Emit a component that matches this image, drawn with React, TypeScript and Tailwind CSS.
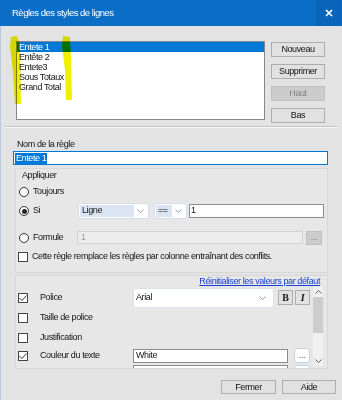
import clsx from "clsx";

const FONT = "font-['Liberation_Sans',Arial,sans-serif]";

const rules = ["Entete 1", "Entête 2", "Entete3", "Sous Totaux", "Grand Total"];

/* ── small Win10-ish controls ─────────────────────────────────────────── */
function Chevron({ up = false, className = "" }: { up?: boolean; className?: string }) {
  return (
    <svg width="7" height="4" viewBox="0 0 7 4" className={className}>
      <polyline
        points={up ? "0.5,3.5 3.5,0.5 6.5,3.5" : "0.5,0.5 3.5,3.5 6.5,0.5"}
        fill="none"
        stroke="currentColor"
        strokeWidth="1"
      />
    </svg>
  );
}

function Button({ label, disabled = false, className = "" }: { label: string; disabled?: boolean; className?: string }) {
  return (
    <div
      className={clsx(
        "flex items-center justify-center border leading-none",
        disabled ? "border-[#bfbfbf] bg-[#cccccc] text-[#838383]" : "border-[#adadad] bg-[#e1e1e1] text-[#111]",
        className
      )}
    >
      {label}
    </div>
  );
}

function Radio({ checked = false }: { checked?: boolean }) {
  return (
    <span className="flex h-[10px] w-[10px] shrink-0 items-center justify-center rounded-full border border-[#333] bg-white">
      {checked && <span className="h-[5px] w-[5px] rounded-full bg-[#222]" />}
    </span>
  );
}

function Check({ checked = false }: { checked?: boolean }) {
  return (
    <span className="flex h-[10px] w-[10px] shrink-0 items-center justify-center border border-[#444] bg-white">
      {checked && (
        <svg width="8" height="6" viewBox="0 0 8 6">
          <polyline points="0.5,3 3,5.5 7.5,0.5" fill="none" stroke="#333" strokeWidth="1" />
        </svg>
      )}
    </span>
  );
}

function Combo({ value, className = "" }: { value: string; className?: string }) {
  return (
    <div className={clsx("flex h-[16px] rounded-[3px] border border-[#d3ddef] bg-white p-[1px]", className)}>
      <span className="flex flex-1 items-center bg-[#dbe4f2] pl-[2px]">{value}</span>
      <span className="flex w-[13px] items-center justify-center text-[#8a9cc0]">
        <Chevron />
      </span>
    </div>
  );
}

/* ── option row in the lower panel ────────────────────────────────────── */
function OptionRow({ label, checked, h, children }: { label: string; checked?: boolean; h: string; children?: React.ReactNode }) {
  return (
    <div className={clsx("flex shrink-0 items-center pl-[2px]", h)}>
      <Check checked={checked} />
      <span className="ml-[12px] w-[93px]">{label}</span>
      {children}
    </div>
  );
}

export default function App() {
  return (
    <div
      className={clsx(
        "relative flex h-[400px] w-[342px] flex-col overflow-hidden bg-[#e3e3e3] text-[9px] tracking-[-0.4px] text-[#141414]",
        FONT
      )}
    >
      {/* Title bar */}
      <div className="flex h-[26px] shrink-0 items-center bg-[#0a6dc6] text-white">
        <span className="flex-1 pl-[12px] text-[9.5px] tracking-[-0.5px]">Règles des styles de lignes</span>
        <span className="mr-[1px] flex h-full w-[25px] items-center justify-center bg-[#0964ba]">
          <svg width="8" height="8" viewBox="0 0 8 8">
            <path d="M1 1L7 7M7 1L1 7" stroke="white" strokeWidth="1.7" />
          </svg>
        </span>
      </div>

      <div className="flex flex-1 flex-col border-l border-[#b7c9e2]">
        {/* Rule list + side buttons */}
        <div className="mt-[15px] flex pl-[15px]">
          <div className="h-[79px] w-[249px] border border-[#828790] bg-white leading-[10px]">
            {rules.map((r, i) => (
              <div key={r} className={clsx("h-[10px] pl-[2px]", i === 0 && "bg-[#0078d7] text-white")}>
                {r}
              </div>
            ))}
          </div>
          <div className="ml-[6px] flex flex-col gap-[7px] pt-[1px]">
            <Button label="Nouveau" className="h-[15px] w-[54px]" />
            <Button label="Supprimer" className="h-[15px] w-[54px]" />
            <Button label="Haut" disabled className="h-[15px] w-[54px]" />
            <Button label="Bas" className="h-[15px] w-[54px]" />
          </div>
        </div>

        {/* Separator */}
        <div className="ml-[4px] mt-[3px] h-[2px] w-[332px] border-t border-b border-t-[#c6c6c6] border-b-[#f6f6f6]" />

        {/* Rule name */}
        <div className="mt-[10px] h-[12px] pl-[16px] leading-[12px]">Nom de la règle</div>
        <div className="ml-[12px] mt-[1px] flex h-[14px] w-[315px] items-center border border-[#0078d7] bg-white pl-[1px]">
          <span className="bg-[#0078d7] px-[1px] leading-[11px] text-white">Entete 1</span>
        </div>

        {/* Appliquer group */}
        <div className="ml-[14px] mt-[3px] flex h-[105px] w-[313px] flex-col border border-[#d8d8d8] bg-[#e7e7e7]">
          <div className="h-[13px] pl-[6px] leading-[13px]">Appliquer</div>
          <div className="flex h-[20px] items-center gap-[4px] pl-[3px]">
            <Radio />
            <span>Toujours</span>
          </div>
          <div className="flex h-[18px] items-center pl-[3px]">
            <span className="flex w-[59px] items-center gap-[4px]">
              <Radio checked />
              <span>Si</span>
            </span>
            <Combo value="Ligne" className="w-[71px]" />
            <Combo value="==" className="ml-[5px] w-[33px]" />
            <div className="ml-[2px] flex h-[14px] w-[135px] items-center border border-[#8c8c8c] bg-white pl-[1px]">1</div>
          </div>
          <div className="mt-[9px] flex h-[17px] items-center pl-[3px]">
            <span className="flex w-[58px] items-center gap-[4px]">
              <Radio />
              <span>Formule</span>
            </span>
            <div className="flex h-[13px] w-[226px] items-center border border-[#d3d3d3] bg-[#ececec] pl-[3px] text-[#9a9a9a]">1</div>
            <Button label="..." disabled className="ml-[3px] h-[14px] w-[16px]" />
          </div>
          <div className="mt-[4px] flex h-[14px] items-center gap-[4px] pl-[2px]">
            <Check />
            <span>Cette règle remplace les règles par colonne entraînant des conflits.</span>
          </div>
        </div>

        {/* Style options group */}
        <div className="ml-[14px] mt-[2px] flex h-[94px] w-[313px] flex-col border border-[#d8d8d8] bg-[#e7e7e7]">
          <div className="flex h-[11px] justify-end pr-[7px] leading-[11px]">
            <span className="text-[#1740d0] underline">Réinitialiser les valeurs par défaut</span>
          </div>
          <div className="flex h-[81px] overflow-hidden">
            <div className="flex flex-1 flex-col">
              <OptionRow label="Police" checked h="h-[21px]">
                <div className="flex h-[20px] w-[141px] items-center rounded-[3px] border border-[#dde3ee] bg-white pl-[2px]">
                  <span className="flex-1">Arial</span>
                  <Chevron className="mr-[7px] text-[#8a9cc0]" />
                </div>
                <Button label="B" className="ml-[4px] h-[15px] w-[15px] font-['Liberation_Serif',serif] text-[10px] font-bold" />
                <Button label="I" className="ml-[2px] h-[15px] w-[15px] font-['Liberation_Serif',serif] text-[10px] font-bold italic" />
              </OptionRow>
              <OptionRow label="Taille de police" h="h-[20px]" />
              <OptionRow label="Justification" h="h-[19px]" />
              <OptionRow label="Couleur du texte" checked h="h-[17px]">
                <div className="flex h-[14px] w-[155px] items-center border border-[#8c8c8c] bg-white pl-[2px]">White</div>
                <div className="ml-[6px] flex h-[15px] w-[16px] items-center justify-center rounded-[3px] border border-[#c5d3ea] bg-white text-[#4b4b9a]">
                  ...
                </div>
              </OptionRow>
              <div className="flex h-[17px] shrink-0 items-start pl-[117px]">
                <div className="mt-[1px] h-[14px] w-[155px] border border-[#8c8c8c] bg-white" />
                <div className="ml-[6px] mt-[1px] h-[15px] w-[16px] rounded-[3px] border border-[#c5d3ea] bg-white" />
              </div>
            </div>
            {/* Scrollbar */}
            <div className="mr-[4px] flex h-[79px] w-[10px] flex-col bg-[#f0f0f0] text-[#606060]">
              <span className="flex h-[10px] items-center justify-center">
                <Chevron up />
              </span>
              <span className="h-[36px] bg-[#cdcdcd]" />
              <span className="flex-1" />
              <span className="flex h-[10px] items-center justify-center">
                <Chevron />
              </span>
            </div>
          </div>
        </div>

        {/* Footer */}
        <div className="mt-[11px] flex justify-end gap-[6px] pr-[6px]">
          <Button label="Fermer" className="h-[14px] w-[55px]" />
          <Button label="Aide" className="h-[14px] w-[54px]" />
        </div>
      </div>

      {/* Yellow highlighter marks over the list */}
      <svg className="pointer-events-none absolute left-0 top-0 mix-blend-multiply" width="342" height="400">
        <path d="M11 37 L17 36 L20 46 L21 104 L15 104 L13 72 L10 46 Z" fill="#f0f000" />
        <path d="M63 36 L70 37 L71 60 L72 100 L66 100 L65 70 L62 46 Z" fill="#f0f000" />
      </svg>
    </div>
  );
}
